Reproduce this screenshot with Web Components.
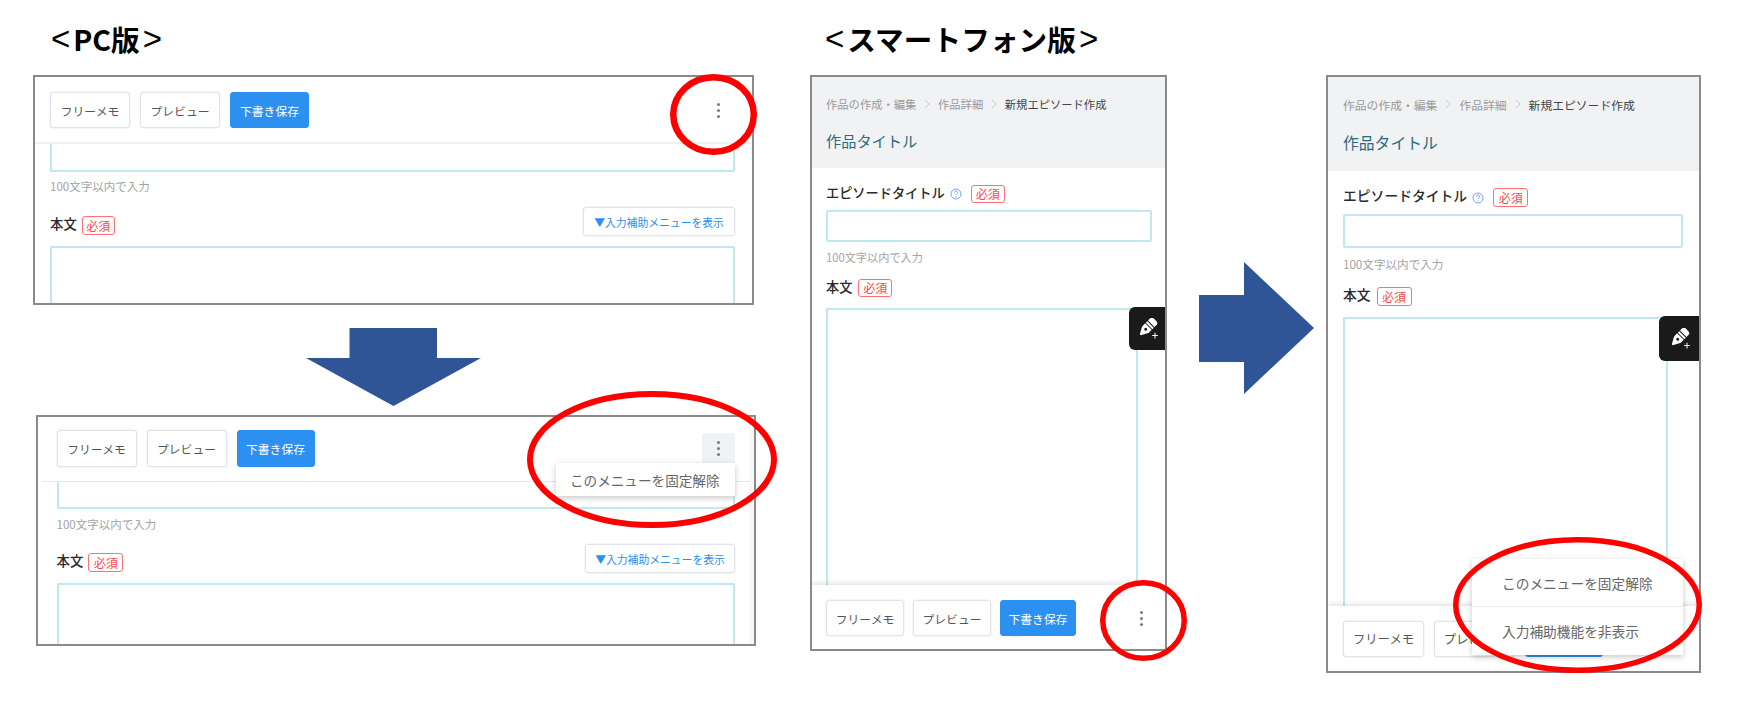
<!DOCTYPE html>
<html lang="ja">
<head>
<meta charset="utf-8">
<title>メニュー固定解除</title>
<style>
html,body{margin:0;padding:0;background:#fff}
body{font-family:"Noto Sans CJK JP","Noto Sans",sans-serif}
</style>
</head>
<body>
<design-slide>
  <page-title style="--x:51px;--y:18px;--ls:0px">PC版</page-title>
  <page-title style="--x:825px;--y:18px;--ls:0.1px">スマートフォン版</page-title>

  <pc-frame style="--x:33px;--y:75px;--w:721px;--h:230px;--pl:15px;--pr:17px;--pt:15px;--pb:14px;--sep:2px;--sep-c:#eff0f1;--sep-m:0px;--cut:28px;--hint-m:5px;--row-m:12px;--ta-m:10px;--gap:10px;--b1:80px;--b3:79px;--bh:36px;--badge:33px;--add:152px">
  </pc-frame>

  <pc-frame menu style="--x:36px;--y:415px;--w:720px;--h:231px;--pl:18.5px;--pr:19px;--pt:13px;--pb:14px;--sep:1px;--sep-c:#e6e8ea;--sep-m:4px;--cut:27px;--hint-m:6px;--row-m:11px;--ta-m:10px;--gap:10px;--b1:80px;--b3:78px;--bh:37px;--badge:35px;--add:150px;--rail:#f8f8f8">
  </pc-frame>

  <sp-frame style="--x:810px;--y:75px;--w:357px;--h:576px;--pl:14px;--pr:13px;--fs-crumb:11.3px;--fs-title:15.2px;--fs-label:13.2px;--fs-hint:11.2px;--title-m:15px;--head-pb:16px;--input-h:32px;--hint-m:6px;--row-m:13px;--ta-mr:14px;--foot-h:64px;--b1:78px;--b3:76px;--gap:9px;--badge:34px;--badge-h:18px;--tab-t:230px;--tab-w:36px;--tab-h:43px;--btn-fs:11.8px;--crumb-gap:7.8px">
  </sp-frame>

  <sp-frame menu style="--x:1326px;--y:75px;--w:375px;--h:598px;--pl:15px;--pr:16px;--fs-crumb:11.8px;--fs-title:15.8px;--fs-label:13.8px;--fs-hint:11.6px;--title-m:18px;--head-pb:16px;--input-h:34px;--hint-m:7px;--row-m:14px;--ta-mr:15px;--foot-h:65px;--b1:81px;--b3:78px;--gap:10px;--badge:35px;--badge-h:19px;--tab-t:239px;--tab-w:40px;--tab-h:45px;--btn-fs:12.3px;--crumb-gap:8px">
  </sp-frame>

  <slide-arrow dir="down" style="--x:306px;--y:328px;--w:175px;--h:78px"></slide-arrow>
  <slide-arrow dir="right" style="--x:1199px;--y:262px;--w:115px;--h:132px"></slide-arrow>

  <callout-ring style="--x:670px;--y:74px;--w:87px;--h:81px;--s:6.5"></callout-ring>
  <callout-ring style="--x:527px;--y:391px;--w:250px;--h:137px;--s:6"></callout-ring>
  <callout-ring style="--x:1100px;--y:580px;--w:87px;--h:81px;--s:5.5"></callout-ring>
  <callout-ring style="--x:1453px;--y:537px;--w:249px;--h:136px;--s:5.5"></callout-ring>
</design-slide>

<script>
function def(name, css, html, init){
  customElements.define(name, class extends HTMLElement{
    constructor(){
      super();
      const r=this.attachShadow({mode:'open'});
      r.innerHTML='<style>'+css+'</style>'+(typeof html==='function'?html(this):html);
    }
    connectedCallback(){
      if(init&&!this._done){this._done=true;init(this,this.shadowRoot);}
    }
  });
}
const placed=':host{position:absolute;left:var(--x);top:var(--y);width:var(--w);height:var(--h);display:block;box-sizing:border-box}';

def('design-slide',
  ':host{display:block;position:relative;width:1739px;height:713px;overflow:hidden;background:#fff;font-family:"Noto Sans CJK JP","Noto Sans",sans-serif}',
  '<slot></slot>');

def('page-title',
  `:host{position:absolute;left:var(--x);top:var(--y);display:flex;align-items:center;height:42px;font-size:28.6px;font-weight:700;color:#000;white-space:nowrap;line-height:42px}
   .b{font-family:"Liberation Sans",sans-serif;font-weight:400;font-size:33px;line-height:42px;margin:0 3px 0 0}
   .e{margin:0 0 0 3px}
   .t{letter-spacing:var(--ls,0)}`,
  '<span class="b">&lt;</span><span class="t"><slot></slot></span><span class="b e">&gt;</span>');

def('ui-btn',
  `:host{display:flex;align-items:center;justify-content:center;box-sizing:border-box;height:var(--bh,36px);width:var(--bw,80px);border:1px solid #e1e4e9;border-radius:3px;background:#fff;color:#555;font-size:var(--btn-fs,11.8px);white-space:nowrap;box-shadow:0 0 0 .5px #eceef1}
   :host([primary]){background:#2b90f0;border-color:#2b90f0;color:#fff;box-shadow:none}`,
  '<slot></slot>');

def('req-badge',
  `:host{display:inline-flex;align-items:center;justify-content:center;box-sizing:border-box;width:var(--badge,33px);height:var(--badge-h,19px);border:1px solid #ff6f73;border-radius:3px;color:#f9474c;font-size:12px;font-weight:400;line-height:1;background:#fff}`,
  '<slot></slot>');

def('kebab-btn',
  `:host{display:flex;align-items:center;justify-content:center;width:33px;height:31px;border-radius:2px;flex:none}
   :host([active]){background:#f1f2f4}
   i{display:block;width:3px;height:3px;border-radius:50%;background:#7a7a7a;box-shadow:0 -6px 0 #7a7a7a,0 6px 0 #7a7a7a}`,
  '<i></i>');

def('text-field',
  `:host{display:block;box-sizing:border-box;height:var(--fh,32px);border:2px solid #bfe9ef;border-radius:2px;background:#fff}
   :host([cut]){border-top:none;border-radius:0 0 2px 2px}`,
  '');

def('text-area',
  `:host{display:block;box-sizing:border-box;flex:1 1 auto;min-height:0;border:2px solid #bfe9ef;border-bottom:none;border-radius:2px 2px 0 0;background:#fff}`,
  '');

def('hint-line',
  `:host{display:block;height:18px;line-height:18px;font-size:var(--fs-hint,11.5px);color:#a3a3a3;white-space:nowrap}`,
  '<slot></slot>');

def('field-label',
  `:host{display:inline-flex;align-items:center;height:19px;line-height:1;padding-bottom:3px;box-sizing:border-box;font-size:var(--fs-label,13.4px);font-weight:500;color:#2a2a2a;white-space:nowrap}`,
  '<slot></slot>');

def('help-icon',
  `:host{display:inline-flex;width:12px;height:12px;margin-left:5px;flex:none}svg{display:block;width:100%;height:100%}`,
  `<svg viewBox="0 0 12 12" fill="none"><circle cx="6" cy="6" r="5" stroke="#7fa2ea" stroke-width="1"/><path d="M4.400 4.700c0-1 .8-1.600 1.700-1.600s1.600.6 1.600 1.500c0 1.300-1.700 1.300-1.700 2.600" stroke="#6f94e4" stroke-width=".9"/><circle cx="6" cy="8.800" r=".6" fill="#6f94e4"/></svg>`);

def('pop-menu',
  `:host{position:absolute;display:block;background:#fff;box-shadow:0 2px 6px rgba(0,0,0,.22);color:#666;white-space:nowrap;z-index:5}`,
  '<slot></slot>');

def('pop-item',
  `:host{display:flex;align-items:center;box-sizing:border-box;height:var(--ih,33px);padding-left:var(--il,14px);font-size:var(--ifs,13.4px)}
   :host(:not(:last-child)){border-bottom:1px solid #eceef0}`,
  '<slot></slot>');

def('assist-tab',
  `:host{position:absolute;right:0;top:var(--tab-t);width:var(--tab-w);height:var(--tab-h);display:flex;align-items:center;justify-content:center;background:#1a1a1a;border-radius:6px 0 0 6px;z-index:3}
   svg{width:22px;height:22px;display:block;margin-left:2px}`,
  `<svg viewBox="0 0 22 22"><g transform="rotate(45 10 10)" fill="#fff">
    <path d="M5.400 4V1.200C5.400-.4 6.600-1.500 8.200-1.500h3.600c1.600 0 2.800 1.100 2.800 2.700V4Z"/>
    <rect x="5.400" y="5" width="9.200" height="2"/>
    <path fill-rule="evenodd" d="M5.400 8h9.200v3.300c0 .9-.2 1.500-.6 2.200L10.600 19.500h-1.200L6 13.500c-.4-.7-.6-1.300-.6-2.200Z M10 10.300a1.500 1.500 0 1 0 0 3a1.500 1.500 0 1 0 0-3Z"/>
  </g><path fill="#fff" d="M17.500 14.800h1v2.300h2.300v1h-2.300v2.300h-1v-2.300h-2.300v-1h2.300Z"/></svg>`);

def('pc-frame',
  placed+`
  :host{border:2px solid #8a8a8a;background:#fff;overflow:hidden;z-index:1;box-shadow:inset -5px 0 0 var(--rail,#fff)}
  .wrap{display:flex;flex-direction:column;height:100%;position:relative}
  .bar{display:flex;align-items:center;gap:var(--gap);padding:var(--pt) calc(var(--pr) - var(--sep-m)) var(--pb) calc(var(--pl) - var(--sep-m));margin:0 var(--sep-m);border-bottom:var(--sep) solid var(--sep-c);flex:none}
  kebab-btn{margin-left:auto}
  .b{display:flex;flex-direction:column;flex:1 1 auto;min-height:0;padding:0 var(--pr) 0 var(--pl)}
  text-field{flex:none;--fh:var(--cut)}
  hint-line{margin-top:var(--hint-m);flex:none}
  .row{display:flex;justify-content:space-between;align-items:flex-end;margin-top:var(--row-m);flex:none}
  .lab{display:flex;align-items:center;gap:5px;margin-bottom:1px}
  .add{display:flex;align-items:center;justify-content:center;box-sizing:border-box;width:var(--add);height:29px;border:1px solid #e1e4e9;border-radius:3px;color:#2b8fee;font-size:10.8px;white-space:nowrap;box-shadow:0 0 0 .5px #eceef1}
  .ta{margin-top:var(--ta-m)}
  pop-menu{right:var(--pr);top:46px;width:179px;--il:14px;--ih:33px;--ifs:13.6px}
  `,
  h=>`<div class="wrap">
    <div class="bar">
      <ui-btn style="--bw:var(--b1)">フリーメモ</ui-btn>
      <ui-btn style="--bw:var(--b1)">プレビュー</ui-btn>
      <ui-btn primary style="--bw:var(--b3)">下書き保存</ui-btn>
      <kebab-btn ${h.hasAttribute('menu')?'active':''}></kebab-btn>
    </div>
    <div class="b">
      <text-field cut></text-field>
      <hint-line>100文字以内で入力</hint-line>
      <div class="row">
        <div class="lab"><field-label>本文</field-label><req-badge>必須</req-badge></div>
        <div class="add">▼入力補助メニューを表示</div>
      </div>
      <text-area class="ta"></text-area>
    </div>
    ${h.hasAttribute('menu')?'<pop-menu><pop-item>このメニューを固定解除</pop-item></pop-menu>':''}
  </div>`);

def('sp-frame',
  placed+`
  :host{border:2px solid #8a8a8a;background:#fff;overflow:hidden;z-index:1}
  .wrap{display:flex;flex-direction:column;height:100%;position:relative}
  .head{background:#f1f2f4;padding:18px var(--pr) var(--head-pb) var(--pl);flex:none}
  .crumb{display:flex;align-items:center;height:18px;font-size:var(--fs-crumb);color:#9a9a9a;white-space:nowrap}
  .crumb b{font-weight:400;color:#444}
  .crumb svg{width:6px;height:10px;margin:0 var(--crumb-gap);flex:none}
  .title{margin-top:var(--title-m);height:24px;line-height:24px;font-size:var(--fs-title);color:#2c6b7e;white-space:nowrap}
  .b{display:flex;flex-direction:column;flex:1 1 auto;min-height:0;padding:17px var(--pr) 0 var(--pl)}
  .lab{display:flex;align-items:center;flex:none;height:var(--badge-h)}
  .lab req-badge{margin-left:6px}
  .lab help-icon + req-badge{margin-left:9px}
  text-field{margin-top:7px;flex:none;--fh:var(--input-h)}
  hint-line{margin-top:var(--hint-m);flex:none}
  .r2{margin-top:var(--row-m)}
  text-area{margin-top:11px;margin-right:var(--ta-mr)}
  .foot{flex:none;box-sizing:border-box;height:var(--foot-h);padding:15px 7.5px 0 var(--pl);display:flex;align-items:flex-start;gap:var(--gap);background:#fff;box-shadow:0 -2px 5px rgba(0,0,0,.12);position:relative;z-index:2}
  kebab-btn{margin-left:auto;margin-top:3px}
  pop-menu{right:16px;bottom:16px;width:211px;--il:30px;--ih:48px;--ifs:13.7px}
  `,
  h=>`<div class="wrap">
    <div class="head">
      <div class="crumb">作品の作成・編集<svg viewBox="0 0 6 10" fill="none"><path d="M1 1l4 4-4 4" stroke="#c9cbcf" stroke-width="1"/></svg>作品詳細<svg viewBox="0 0 6 10" fill="none"><path d="M1 1l4 4-4 4" stroke="#c9cbcf" stroke-width="1"/></svg><b>新規エピソード作成</b></div>
      <div class="title">作品タイトル</div>
    </div>
    <div class="b">
      <div class="lab"><field-label>エピソードタイトル</field-label><help-icon></help-icon><req-badge>必須</req-badge></div>
      <text-field></text-field>
      <hint-line>100文字以内で入力</hint-line>
      <div class="lab r2"><field-label>本文</field-label><req-badge>必須</req-badge></div>
      <text-area></text-area>
    </div>
    <assist-tab></assist-tab>
    <div class="foot">
      <ui-btn style="--bw:var(--b1)">フリーメモ</ui-btn>
      <ui-btn style="--bw:var(--b1)">プレビュー</ui-btn>
      <ui-btn primary style="--bw:var(--b3)">下書き保存</ui-btn>
      ${h.hasAttribute('menu')?'':'<kebab-btn></kebab-btn>'}
    </div>
    ${h.hasAttribute('menu')?'<pop-menu style="z-index:5"><pop-item>このメニューを固定解除</pop-item><pop-item>入力補助機能を非表示</pop-item></pop-menu>':''}
  </div>`);

def('slide-arrow',
  placed+`:host{z-index:2}svg{display:block;width:100%;height:100%}`,
  h=>h.getAttribute('dir')==='down'
    ?'<svg viewBox="0 0 175 78" preserveAspectRatio="none"><polygon fill="#2f5597" points="43.500,0 131,0 131,30 175,30 87.500,78 0,30 43.500,30"/></svg>'
    :'<svg viewBox="0 0 115 132" preserveAspectRatio="none"><polygon fill="#2f5597" points="0,33 45,33 45,0 115,66 45,132 45,100 0,100"/></svg>');

def('callout-ring',
  placed+`:host{z-index:4;pointer-events:none}svg{display:block;width:100%;height:100%;overflow:visible}`,
  '<svg><ellipse fill="none" stroke="#fe0000"></ellipse></svg>',
  (h,r)=>{
    const cs=getComputedStyle(h);
    const w=parseFloat(cs.getPropertyValue('--w')),hh=parseFloat(cs.getPropertyValue('--h')),s=parseFloat(cs.getPropertyValue('--s'));
    const e=r.querySelector('ellipse');
    e.setAttribute('cx',w/2);e.setAttribute('cy',hh/2);
    e.setAttribute('rx',w/2-s/2);e.setAttribute('ry',hh/2-s/2);
    e.setAttribute('stroke-width',s);
  });
</script>
</body>
</html>
